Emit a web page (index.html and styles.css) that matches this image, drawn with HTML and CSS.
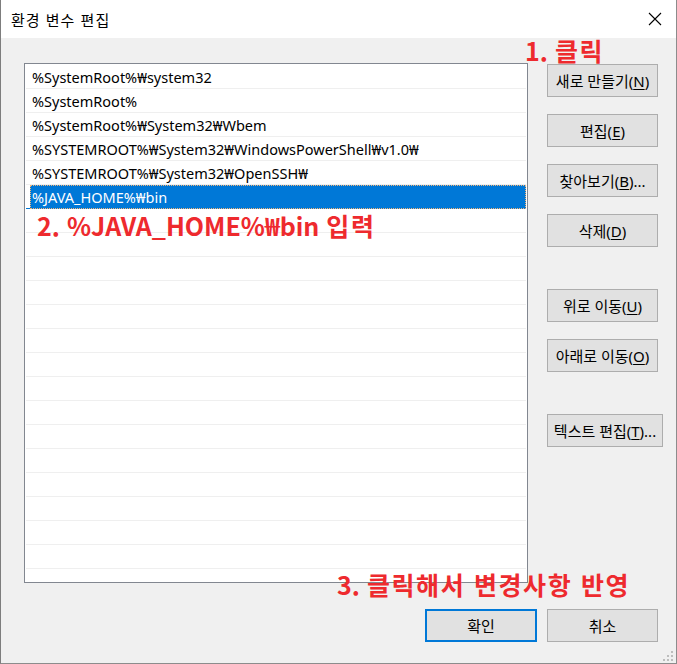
FILE: index.html
```html
<!DOCTYPE html>
<html lang="ko">
  <head>
    <meta charset="UTF-8" />
    <meta name="viewport" content="width=device-width, initial-scale=1.0" />
    <title>환경 변수 편집</title>
    <link rel="stylesheet" href="styles.css">
  </head>

  <body>
    <div class="dialog">
      <header class="titlebar">
        <span class="title">환경 변수 편집</span>
        <span class="close">
          <svg width="14" height="14" viewBox="0 0 14 14">
            <path d="M1 1 L13 13 M13 1 L1 13" stroke="#000" stroke-width="1.1" fill="none" />
          </svg>
        </span>
      </header>

      <main class="content">
        <div class="main">
          <div class="list">
            <div class="row"><span class="cell">%SystemRoot%₩system32</span></div>
            <div class="row"><span class="cell">%SystemRoot%</span></div>
            <div class="row"><span class="cell">%SystemRoot%₩System32₩Wbem</span></div>
            <div class="row"><span class="cell">%SYSTEMROOT%₩System32₩WindowsPowerShell₩v1.0₩</span></div>
            <div class="row"><span class="cell">%SYSTEMROOT%₩System32₩OpenSSH₩</span></div>
            <div class="row selected"><span class="cell">%JAVA_HOME%₩bin</span></div>
            <div class="row"></div>
            <div class="row"></div>
            <div class="row"></div>
            <div class="row"></div>
            <div class="row"></div>
            <div class="row"></div>
            <div class="row"></div>
            <div class="row"></div>
            <div class="row"></div>
            <div class="row"></div>
            <div class="row"></div>
            <div class="row"></div>
            <div class="row"></div>
            <div class="row"></div>
            <div class="row"></div>
            <div class="row"></div>
          </div>

          <div class="actions">
            <button class="btn">새로 만들기(<u>N</u>)</button>
            <button class="btn">편집(<u>E</u>)</button>
            <button class="btn">찾아보기(<u>B</u>)...</button>
            <button class="btn group-end">삭제(<u>D</u>)</button>
            <button class="btn">위로 이동(<u>U</u>)</button>
            <button class="btn group-end">아래로 이동(<u>O</u>)</button>
            <button class="btn btn-wide">텍스트 편집(<u>T</u>)...</button>
          </div>
        </div>

        <footer class="footer">
          <button class="btn btn-default">확인</button>
          <button class="btn">취소</button>
        </footer>
      </main>

      <span class="note note1">1. <span class="spread">클릭</span></span>
      <span class="note note2">2. %JAVA_HOME%₩bin <span class="spread">입력</span></span>
      <span class="note note3">3. <span class="spread">클릭해서 변경사항 반영</span></span>

      <span class="grip">
        <svg width="11" height="11" viewBox="0 0 11 11">
          <rect x="8" y="0" width="2" height="2" fill="#bdbdbd" />
          <rect x="4" y="4" width="2" height="2" fill="#bdbdbd" />
          <rect x="8" y="4" width="2" height="2" fill="#bdbdbd" />
          <rect x="0" y="8" width="2" height="2" fill="#bdbdbd" />
          <rect x="4" y="8" width="2" height="2" fill="#bdbdbd" />
          <rect x="8" y="8" width="2" height="2" fill="#bdbdbd" />
        </svg>
      </span>
    </div>
  </body>
</html>
```

FILE: styles.css
```css
* {
  margin: 0;
  padding: 0;
  box-sizing: border-box;
}

body {
  font-family: "Noto Sans", "Noto Sans CJK KR", sans-serif;
  font-size: 15px;
  color: #000;
  background-color: #f0f0f0;
}

.dialog {
  position: relative;
  width: 677px;
  height: 664px;
  background-color: #f0f0f0;
  border-left: 1px solid #7d7d7d;
  border-right: 1px solid #8c8c8c;
  border-bottom: 1px solid #8c8c8c;
  overflow: hidden;
}

.titlebar {
  display: flex;
  align-items: center;
  justify-content: space-between;
  height: 38px;
  padding: 0 14px 0 10px;
  background-color: #fff;
}

.title {
  font-family: "Noto Sans CJK KR", sans-serif;
  font-size: 15px;
  letter-spacing: 1px;
}

.close {
  display: flex;
}

.content {
  padding: 25px 18px 0 23px;
}

.main {
  display: flex;
  gap: 19px;
}

.list {
  flex: none;
  width: 504px;
  height: 520px;
  padding: 1px 1px 0 1px;
  background-color: #fff;
  border: 1px solid #828790;
  overflow: hidden;
}

.row {
  height: 24px;
  padding-left: 4px;
  border-bottom: 1px solid #efefef;
}

.cell {
  display: block;
  height: 23px;
  padding: 1px 0 0 2px;
  font-size: 14.5px;
  line-height: 22px;
  white-space: nowrap;
}

.selected {
  border-bottom-color: #0078d7;
}

.selected .cell {
  height: 24px;
  color: #fff;
  background-color: #0078d7;
  outline: 1px dotted #f3b57a;
  outline-offset: -1px;
}

.actions {
  flex: none;
  width: 111px;
  display: flex;
  flex-direction: column;
  align-items: flex-start;
  padding-top: 1px;
}

.btn {
  flex: none;
  width: 111px;
  height: 33px;
  margin-bottom: 17px;
  font-family: "Noto Sans", "Noto Sans CJK KR", sans-serif;
  font-size: 15px;
  color: #000;
  background-color: #e1e1e1;
  border: 1px solid #adadad;
  white-space: nowrap;
}

.btn u {
  text-underline-offset: 2px;
}

.group-end {
  margin-bottom: 42px;
}

.btn-wide {
  width: 116px;
}

.footer {
  display: flex;
  justify-content: flex-end;
  gap: 10px;
  margin-top: 26px;
}

.footer .btn {
  margin-bottom: 0;
}

.btn-default {
  width: 112px;
  border: 2px solid #0078d7;
}

.note {
  position: absolute;
  font-family: "Noto Sans CJK KR", sans-serif;
  font-weight: 700;
  font-size: 25px;
  line-height: 25px;
  color: #ee2a2e;
  white-space: nowrap;
}

.spread {
  letter-spacing: 1.6px;
}

.note1 {
  left: 524px;
  top: 38px;
}

.note2 {
  left: 36px;
  top: 213px;
}

.note3 {
  left: 336px;
  top: 572px;
}

.grip {
  position: absolute;
  right: 2px;
  bottom: 1px;
  display: flex;
}
```
